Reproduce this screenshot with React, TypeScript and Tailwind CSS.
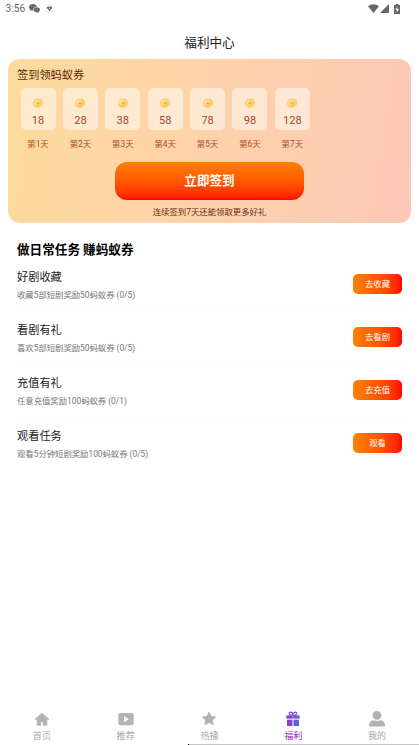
import React from 'react';

interface Task {
  title: string;
  desc: string;
  action: string;
}

const rewards = [18, 28, 38, 58, 78, 98, 128];

const tasks: Task[] = [
  { title: '好剧收藏', desc: '收藏5部短剧奖励50蚂蚁券 (0/5)', action: '去收藏' },
  { title: '看剧有礼', desc: '喜欢5部短剧奖励50蚂蚁券 (0/5)', action: '去看剧' },
  { title: '充值有礼', desc: '任意充值奖励100蚂蚁券 (0/1)', action: '去充值' },
  { title: '观看任务', desc: '观看5分钟短剧奖励100蚂蚁券 (0/5)', action: '观看' },
];

const StatusBar = () => (
  <div className="h-[18px] pl-[5.500px] pr-[6px] pb-px flex items-center text-[#666]">
    <span className="text-[10.200px] leading-none w-[23.500px] pt-px">3:56</span>
    <svg className="w-[11px] h-[9px]" viewBox="0 0 22 18" fill="#666">
      <path d="M8 0C3.500 0 0 2.900 0 6.500c0 2 1.100 3.700 2.900 4.900L2 14l3-1.500c1 .3 2 .5 3 .5C8 8.500 11 5.500 15.500 5.500 15 2.200 12 0 8 0z" />
      <path d="M15.300 6.500c-3.600 0-6.300 2.300-6.300 5.200s2.700 5.100 6.300 5.100c.8 0 1.600-.1 2.300-.4L20 17.700l-.6-2.300c1.600-.9 2.600-2.200 2.600-3.700 0-2.900-3-5.200-6.700-5.200z" />
      <g fill="#fff">
        <circle cx="5.300" cy="4.600" r=".8" />
        <circle cx="10.300" cy="4.600" r=".8" />
        <circle cx="13.300" cy="10.300" r=".8" />
        <circle cx="17.600" cy="10.300" r=".8" />
      </g>
    </svg>
    <svg className="w-[9px] h-[9px] ml-[5px]" viewBox="0 0 18 18">
      <circle cx="9" cy="9" r="8" fill="#fafafa" stroke="#d2d2d2" strokeWidth="1" />
      <path d="M9 14L4 8.500C3 6 6.500 3.500 9 6c2.500-2.500 6 0 5 2.500z" fill="#666" />
      <circle cx="9" cy="8.500" r="1.300" fill="#ddd" />
    </svg>
    <div className="ml-auto mr-[13px] flex items-center">
      <svg className="w-[11px] h-[9px]" viewBox="0 0 22 18" fill="#666">
        <path d="M0 4.500Q11-4 22 4.500L11 18z" />
      </svg>
      <svg className="w-[9px] h-[9px] ml-[1px]" viewBox="0 0 18 18" fill="#666">
        <path d="M18 0v18H0z" />
      </svg>
      <svg className="w-[6px] h-[10px] ml-[5px]" viewBox="0 0 12 20">
        <path d="M3.500 0h5v2H12v18H0V2h3.500z" fill="#666" />
        <path d="M7 5L2.500 11.500H5.500V17L9.800 10H7z" fill="#fff" />
      </svg>
    </div>
  </div>
);

const Coin = () => (
  <svg className="w-[12px] h-[12px]" viewBox="0 0 24 24">
    <circle cx="13" cy="11.500" r="10" fill="#fce5b0" />
    <circle cx="11" cy="12.500" r="9" fill="#f7cf69" />
    <circle cx="9.500" cy="11" r="5.500" fill="#fde08f" />
    <circle cx="12" cy="12.500" r="3.200" fill="#efb748" />
    <path d="M17 3Q23.500 8 20.500 16" fill="none" stroke="#e9c87f" strokeWidth="1.500" />
  </svg>
);

const CheckInCard = () => (
  <section className="mx-2 h-[164px] rounded-[12px] bg-linear-100 from-[#fddb9c] to-[#fdc8b8] flex flex-col">
    <h2 className="mt-[9px] ml-[9px] h-4 leading-4 text-[11.200px] text-[#5c2b0c]">签到领蚂蚁券</h2>
    <div className="mt-[4px] ml-[12.500px] flex gap-[7.400px]">
      {rewards.map((amount, i) => (
        <div key={amount} className="w-[35px] flex flex-col items-center">
          <div className="w-[35px] h-[42px] rounded-[5px] bg-[#fff5e8]/65 flex flex-col items-center pt-[9px]">
            <Coin />
            <span className="mt-[5px] text-[11px] leading-[14px] text-[#9b4a32]">{amount}</span>
          </div>
          <span className="mt-[8px] text-[8.400px] leading-[12px] text-[#b04a2c] whitespace-nowrap">第{i + 1}天</span>
        </div>
      ))}
    </div>
    <button className="mt-[12px] ml-[107px] w-[189px] h-[38px] rounded-[12px] bg-linear-to-b from-[#ff8000] to-[#ff0500] text-white text-[12.600px] font-bold">
      立即签到
    </button>
    <p className="mt-[6px] text-center text-[8.400px] leading-[12px] text-[#6b3018]">连续签到7天还能领取更多好礼</p>
  </section>
);

const TaskRow = ({ task }: { task: Task }) => (
  <div className="h-[53px] border-b border-[#fbfbfb] last:border-b-0 flex justify-between">
    <div className="pt-[12px]">
      <h3 className="text-[11.200px] leading-[16px] text-[#222]">{task.title}</h3>
      <p className="mt-[3px] text-[8.350px] leading-[12px] text-[#777]">{task.desc}</p>
    </div>
    <button className="mt-[16px] w-[49px] h-[20px] rounded-[5px] bg-linear-to-r from-[#ff8000] to-[#ff0000] text-white text-[8.400px]">
      {task.action}
    </button>
  </div>
);

const tabs = [
  {
    label: '首页',
    icon: <path d="M12 3L1.500 12.500h3.200V21.500h5.500v-5.500h3.600v5.500h5.500v-9h3.200z" fill="#b3b3b3" stroke="#b3b3b3" strokeLinejoin="round" />,
  },
  {
    label: '推荐',
    icon: (
      <>
        <rect x=".5" y="3" width="23" height="18.500" rx="3" fill="#b3b3b3" />
        <path d="M9 7.500l7.500 4.800L9 17z" fill="#fff" />
      </>
    ),
  },
  {
    label: '热播',
    icon: <path d="M12 2l3 6.200 6.900.8-5.100 4.700 1.400 6.800-6.200-3.400-6.200 3.400 1.400-6.800L2.100 9 9 8.200z" fill="#b3b3b3" stroke="#b3b3b3" strokeWidth="1.500" strokeLinejoin="round" />,
  },
  {
    label: '福利',
    active: true,
    icon: (
      <>
        <defs>
          <linearGradient id="gift" gradientUnits="userSpaceOnUse" x1="2" y1="0" x2="22" y2="0">
            <stop offset="0" stopColor="#9b34c8" />
            <stop offset="1" stopColor="#4c6fdc" />
          </linearGradient>
        </defs>
        <g fill="url(#gift)">
          <path d="M2 6.500h20v5H2z" />
          <path d="M3 13h8.200v9.500H3z" />
          <path d="M12.800 13H21v9.500h-8.200z" />
        </g>
        <path d="M12 6.500C5 7 5 1.700 8.500 1.700c2 0 3.500 2.500 3.500 4.800 0-2.300 1.500-4.800 3.500-4.800C19 1.700 19 7 12 6.500z" fill="none" stroke="#8744cf" strokeWidth="1.600" />
        <path d="M12 7v4.500" stroke="#fff" strokeWidth=".8" />
      </>
    ),
  },
  {
    label: '我的',
    icon: (
      <g fill="#b3b3b3">
        <circle cx="12" cy="6.500" r="6.500" />
        <path d="M0 22.500c-.5-5 3-8.500 7.500-8.500q4.500 2 9 0c4.500 0 8 3.500 7.500 8.500-.2.500-.6.700-1 .7H1c-.4 0-.8-.2-1-.7z" />
      </g>
    ),
  },
];

const TabBar = () => (
  <nav className="mt-auto h-[37px] grid grid-cols-5">
    {tabs.map((tab) => (
      <div key={tab.label} className="flex flex-col items-center pt-[4px]">
        <svg className="w-4 h-4" viewBox="0 0 24 24">
          {tab.icon}
        </svg>
        <span className={tab.active ? 'mt-[3px] text-[9.100px] leading-[13px] text-[#9a22bd]' : 'mt-[3px] text-[9.100px] leading-[13px] text-[#aaa]'}>
          {tab.label}
        </span>
      </div>
    ))}
  </nav>
);

export default function App() {
  return (
    <div className="w-full h-screen overflow-hidden bg-[#fefefe] flex flex-col font-[Roboto,'Noto_Sans_CJK_SC',sans-serif]">
      <StatusBar />
      <header className="h-[41px] pt-[17px] text-center text-[12.600px] leading-[16px] text-[#222]">福利中心</header>
      <CheckInCard />
      <main className="px-[17px] pt-[19px]">
        <h2 className="h-[16px] leading-[16px] text-[12.600px] font-bold text-black">做日常任务 赚蚂蚁券</h2>
        {tasks.map((task) => (
          <TaskRow key={task.title} task={task} />
        ))}
      </main>
      <TabBar />
      {/* Home indicator */}
      <div className="ml-[188px] h-px shrink-0 border-l border-black bg-[#c6c6c6]" />
    </div>
  );
}
